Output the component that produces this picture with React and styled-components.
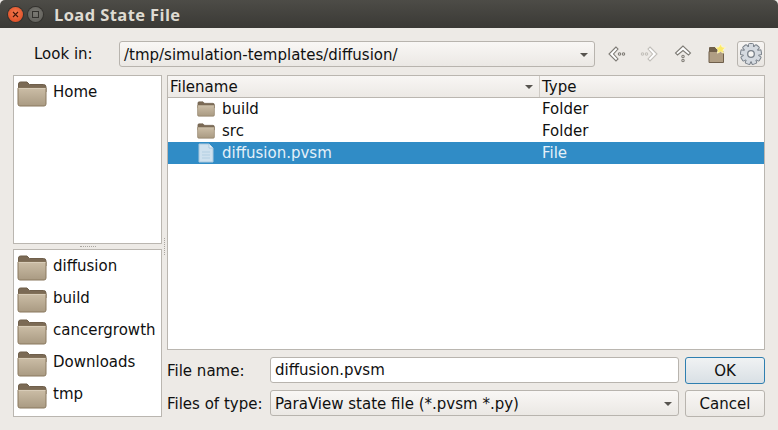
import React from "react";
import styled, { createGlobalStyle } from "styled-components";

const Global = createGlobalStyle`
  html, body { margin: 0; padding: 0; background: #edeae6; }
  body { font-family: "DejaVu Sans", "Liberation Sans", sans-serif; font-size: 15px; color: #101010; }
  * { box-sizing: border-box; }
`;

const Window = styled.div`
  width: 778px; height: 430px; display: flex; flex-direction: column; background: #edeae6; overflow: hidden;
`;
const TitleBar = styled.div`
  height: 28px; flex: none; display: flex; align-items: center; padding-left: 8px;
  background: linear-gradient(#4d4c47, #3a3935); border-radius: 5px 5px 0 0;
  color: #dfdbd2; font-family: "Open Sans", "Noto Sans", sans-serif; font-weight: 700; font-size: 16.5px; letter-spacing: .4px;
`;
const WinButton = styled.span`
  width: 15px; height: 15px; border-radius: 50%; margin-right: ${p => p.$gap}px; flex: none;
  display: flex; align-items: center; justify-content: center;
  background: ${p => p.$close ? "radial-gradient(circle at 50% 40%, #f47a4e, #d9431c)" : "radial-gradient(circle at 50% 40%, #7a7973, #5c5b56)"};
  box-shadow: 0 0 0 1px #33322e;
`;
const Body = styled.div`
  flex: 1; display: flex; flex-direction: column; padding: 13px 13px 0;
`;
const LookRow = styled.div`
  height: 26px; display: flex; align-items: center; margin-bottom: 8px;
`;
const LookLabel = styled.label`
  width: 106px; padding-left: 21px; flex: none;
`;
const Field = styled.div`
  height: 26px; display: flex; align-items: center; justify-content: space-between;
  width: ${p => p.$w}px; padding: ${p => p.$combo ? 1 : 0}px ${p => p.$combo ? 6 : 4}px ${p => p.$combo ? 0 : 1}px 4px;
  border: 1px solid #b8b4ae; border-radius: 3px;
  background: ${p => p.$combo ? "linear-gradient(#f9f7f5, #ebe8e4)" : "#fff"}; white-space: nowrap;
`;
const Arrow = styled.span`
  width: 0; height: 0; border-left: 4px solid transparent; border-right: 4px solid transparent;
  border-top: 4px solid #57544f; flex: none;
`;
const Tools = styled.div`
  display: flex; align-items: center; margin-left: 5px; height: 26px;
`;
const Tool = styled.span`
  width: ${p => p.$w}px; height: 26px; display: flex; align-items: center; justify-content: center; flex: none;
`;
const GearButton = styled.span`
  width: 28px; height: 26px; margin-left: 6px; display: flex; align-items: center; justify-content: center;
  border: 1px solid #b8b4ae; border-radius: 3px; background: linear-gradient(#f7f5f3, #e9e6e2); flex: none;
`;
const Main = styled.div`
  display: grid; grid-template-columns: 149px 5px 598px; height: 342px;
`;
const Side = styled.div`
  display: flex; flex-direction: column;
`;
const HGrip = styled.div`
  height: 5px; flex: none; display: flex; align-items: center; justify-content: center;
  &::before { content: ""; width: 16px; border-top: 1px dotted #aaa6a0; }
`;
const VGrip = styled.div`
  display: flex; align-items: flex-start; justify-content: center; padding-top: 163px;
  &::before { content: ""; height: 17px; border-left: 1px dotted #aaa6a0; }
`;
const Places = styled.div`
  height: ${p => p.$h}px; background: #fff; border: 1px solid #bab6b0; padding: 4px 0 0 3px;
  display: flex; flex-direction: column;
`;
const Place = styled.div`
  height: 32px; display: flex; align-items: flex-start; gap: 6px; line-height: 24px;
  & > svg { flex: none; margin-top: 1px; }
`;
const Right = styled.div`
  width: 598px; display: flex; flex-direction: column;
`;
const Tree = styled.div`
  height: 275px; background: #fff; border: 1px solid #bab6b0; display: flex; flex-direction: column;
`;
const Header = styled.div`
  height: 22px; flex: none; display: grid; grid-template-columns: 371px 1fr;
  background: linear-gradient(#f8f6f4, #ece9e5); border-bottom: 1px solid #bab6b0;
`;
const HeaderCell = styled.div`
  display: flex; align-items: center; justify-content: space-between; padding: 0 6px 0 2px;
  & + & { border-left: 1px solid #cfcbc5; }
`;
const Row = styled.div`
  height: 22px; display: grid; grid-template-columns: 371px 1fr; line-height: 22px;
  background: ${p => p.$sel ? "#308cc6" : "transparent"}; color: ${p => p.$sel ? "#e4f0f8" : "#101010"};
`;
const NameCell = styled.div`
  display: flex; align-items: center; padding-left: 29px; gap: 7px;
`;
const TypeCell = styled.div`
  padding-left: 3px;
`;
const FormRow = styled.div`
  display: flex; align-items: flex-start; height: 33px;
`;
const FormLabel = styled.label`
  width: 103px; flex: none; line-height: 28px;
`;
const Btn = styled.button`
  width: 80px; height: 27px; margin-left: 6px; flex: none; border-radius: 3px; font: inherit; color: #101010; padding: 0;
  border: 1px solid ${p => p.$default ? "#2f7fb0" : "#b8b4ae"};
  background: ${p => p.$default ? "linear-gradient(#f0f2f3, #d9e0e5)" : "linear-gradient(#f8f6f4, #ebe8e4)"};
`;
const Forms = styled.div`
  display: flex; flex-direction: column; margin-top: 7px;
`;

let uid = 0;
const Folder = ({ w = 30, h = 26 }) => {
  const id = "f" + uid++;
  return (
    <svg width={w} height={h} viewBox="0 0 30 26">
      <defs>
        <linearGradient id={id} x1="0" y1="0" x2="0" y2="1">
          <stop offset="0" stopColor="#cbbda6" />
          <stop offset="1" stopColor="#a99a82" />
        </linearGradient>
      </defs>
      <path d="M1.500 3a2 2 0 0 1 2-2h6.500l2.500 2.500h14a2.500 2.500 0 0 1 2.500 2.500v5H1.500z" fill="#7b6a55" stroke="#6f5f4b" />
      <path d="M1 7h28v16a2 2 0 0 1-2 2H3a2 2 0 0 1-2-2z" fill={`url(#${id})`} stroke="#8a795f" />
      <path d="M1.500 7.500h27" stroke="#d8ccb8" />
    </svg>
  );
};

const FileIcon = () => (
  <svg width="18" height="20" viewBox="0 0 18 20">
    <path d="M2 1h10l4 4v14H2z" fill="#cfe1ee" stroke="#a9c8de" />
    <path d="M12 1v4h4" fill="#eaf3f9" stroke="#a9c8de" />
    <path d="M5 9h8M5 12h8M5 15h8" stroke="#b3cfe2" />
  </svg>
);

const Chevron = ({ dir, color = "#7f7c76" }) => (
  <svg width="18" height="16" viewBox="0 0 18 16" fill="none">
    <g transform={dir === "right" ? "translate(18 0) scale(-1 1)" : undefined} stroke={color} strokeWidth="1.100">
      <path d="M8 1 1 8l7 7 2-2L5.500 8 10 3z" fill="#fff" />
      <circle cx="11.500" cy="8" r="1.200" />
      <circle cx="15.500" cy="8" r="1.200" />
    </g>
  </svg>
);

const UpIcon = () => (
  <svg width="18" height="18" viewBox="0 0 18 18" fill="none" stroke="#7f7c76" strokeWidth="1.100">
    <path d="M9 1 1.500 8 3.500 10 9 5.500l5.500 4.500 2-2z" fill="#fff" />
    <circle cx="9" cy="11.500" r="1.200" />
    <circle cx="9" cy="15.500" r="1.200" />
  </svg>
);

const NewFolderIcon = () => (
  <svg width="18" height="20" viewBox="0 0 18 20">
    <path d="M1 4a1 1 0 0 1 1-1h5l1.500 1.500H15v4H1z" fill="#6f5f4b" />
    <path d="M1 7.500h14.500v11H1z" fill="#b09e84" stroke="#6f5f4b" />
    <path d="M12.500 0l1.600 3 3.400.5-2.500 2.300.6 3.400-3.100-1.600-3.100 1.600.6-3.400L7.500 3.500l3.400-.5z" fill="#fbe96a" stroke="#fff8c8" strokeWidth=".8" />
  </svg>
);

const GearIcon = () => {
  const teeth = Array.from({ length: 9 }, (_, i) => i * 40);
  return (
    <svg width="22" height="22" viewBox="0 0 22 22">
      {teeth.map(a => (
        <rect key={a} x="8.500" y="0.500" width="5" height="6" rx="1" fill="#d5dae0" stroke="#79818a" strokeWidth="1" transform={`rotate(${a} 11 11)`} />
      ))}
      <circle cx="11" cy="11" r="7.500" fill="#d5dae0" />
      <circle cx="11" cy="11" r="3.300" fill="#f6f5f3" stroke="#79818a" strokeWidth="1.300" />
    </svg>
  );
};

const Cross = () => (
  <svg width="7" height="7" viewBox="0 0 7 7"><path d="M1 1l5 5M6 1 1 6" stroke="#43170a" strokeWidth="1.100" /></svg>
);
const Square = () => (
  <svg width="7" height="7" viewBox="0 0 7 7"><rect x=".5" y=".5" width="6" height="6" fill="none" stroke="#33322e" /></svg>
);

const bottomPlaces = ["diffusion", "build", "cancergrowth", "Downloads", "tmp"];

export default function App() {
  return (
    <Window>
      <Global />
      <TitleBar>
        <WinButton $close $gap={5}><Cross /></WinButton>
        <WinButton $gap={11}><Square /></WinButton>
        Load State File
      </TitleBar>
      <Body>
        <LookRow>
          <LookLabel>Look in:</LookLabel>
          <Field $combo $w={476}>/tmp/simulation-templates/diffusion/<Arrow /></Field>
          <Tools>
            <Tool $w={34}><Chevron /></Tool>
            <Tool $w={29}><Chevron dir="right" color="#c2bfba" /></Tool>
            <Tool $w={40}><UpIcon /></Tool>
            <Tool $w={28}><NewFolderIcon /></Tool>
            <GearButton><GearIcon /></GearButton>
          </Tools>
        </LookRow>
        <Main>
          <Side>
            <Places $h={169}>
              <Place><Folder />Home</Place>
            </Places>
            <HGrip />
            <Places $h={168}>
              {bottomPlaces.map(n => <Place key={n}><Folder />{n}</Place>)}
            </Places>
          </Side>
          <VGrip />
          <Right>
            <Tree>
              <Header>
                <HeaderCell>Filename<Arrow /></HeaderCell>
                <HeaderCell>Type</HeaderCell>
              </Header>
              <Row><NameCell><Folder w={18} h={16} />build</NameCell><TypeCell>Folder</TypeCell></Row>
              <Row><NameCell><Folder w={18} h={16} />src</NameCell><TypeCell>Folder</TypeCell></Row>
              <Row $sel><NameCell><FileIcon />diffusion.pvsm</NameCell><TypeCell>File</TypeCell></Row>
            </Tree>
            <Forms>
              <FormRow>
                <FormLabel>File name:</FormLabel>
                <Field $w={409}>diffusion.pvsm</Field>
                <Btn $default>OK</Btn>
              </FormRow>
              <FormRow>
                <FormLabel>Files of type:</FormLabel>
                <Field $combo $w={409}>ParaView state file (*.pvsm *.py)<Arrow /></Field>
                <Btn>Cancel</Btn>
              </FormRow>
            </Forms>
          </Right>
        </Main>
      </Body>
    </Window>
  );
}
